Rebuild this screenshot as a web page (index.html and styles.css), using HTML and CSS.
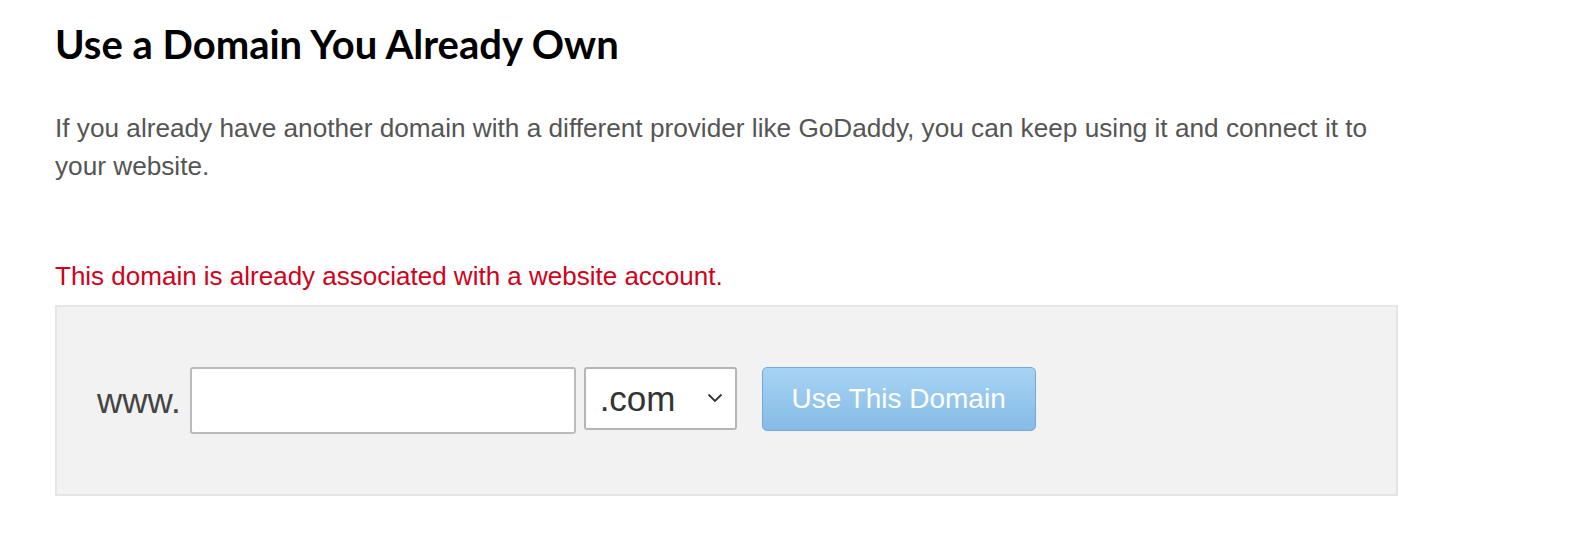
FILE: index.html
```html
<!DOCTYPE html>
<html lang="en">
<head>
<meta charset="UTF-8">
<meta name="viewport" content="width=device-width, initial-scale=1.0">
<title>Use a Domain You Already Own</title>
<link rel="stylesheet" href="styles.css">
</head>
<body>
<div class="page">
    <h2 class="title">Use a Domain You Already Own</h2>
    <p class="intro">If you already have another domain with a different provider like GoDaddy, you can keep using it and connect it to your website.</p>

    <p class="error">This domain is already associated with a website account.</p>

    <form class="domain-box">
        <label for="domain" class="prefix">www.</label>
        <input type="text" id="domain" class="domain-input">
        <div class="tld">
            <select id="tld">
                <option>.com</option>
                <option>.net</option>
                <option>.org</option>
            </select>
            <svg class="chevron" width="16" height="10" viewBox="0 0 16 10"><path d="M1.5 1.5 L8 8 L14.5 1.5" fill="none" stroke="#333" stroke-width="1.8"/></svg>
        </div>
        <button type="button" class="use-btn">Use This Domain</button>
    </form>
</div>
</body>
</html>
```

FILE: styles.css
```css
body {
    margin: 0;
    background: #fff;
    font-family: "Liberation Sans", Arial, sans-serif;
}
.page {
    width: 1343px;
    padding: 0 0 0 55px;
}
.title {
    font-family: Lato, "Open Sans", sans-serif;
    font-weight: 700;
    font-size: 40px;
    line-height: 48px;
    margin: 20px 0 0;
    color: #000;
}
.intro {
    font-size: 26.2px;
    line-height: 38px;
    color: #555;
    margin: 41px 0 0;
}
.error {
    font-size: 26px;
    line-height: 38px;
    color: #d0021b;
    margin: 72px 0 0;
}
.domain-box {
    display: flex;
    align-items: flex-start;
    margin-top: 10px;
    padding: 60px 40px;
    background: #f2f2f2;
    border: 2px solid #e5e5e5;
}
.prefix {
    font-size: 35px;
    color: #444;
    line-height: 67px;
    margin-right: 9px;
    margin-left: 0;
}
.domain-input {
    width: 386px;
    height: 67px;
    box-sizing: border-box;
    border: 2px solid #bbb;
    border-radius: 3px;
    background: #fff;
    margin: 0;
}
.tld {
    position: relative;
    margin-left: 8px;
}
.tld select {
    appearance: none;
    -webkit-appearance: none;
    width: 153px;
    height: 63px;
    box-sizing: border-box;
    border: 2px solid #b5b5b5;
    border-radius: 3px;
    background: #fff;
    font-family: "Liberation Sans", Arial, sans-serif;
    font-size: 35px;
    color: #333;
    padding: 0 0 0 14px;
}
.chevron {
    position: absolute;
    right: 14px;
    top: 26px;
    pointer-events: none;
}
.use-btn {
    margin-left: 25px;
    width: 274px;
    height: 64px;
    border: 1px solid #72a9d9;
    border-radius: 5px;
    background: linear-gradient(#a7d4f4, #85bbe5);
    color: #fff;
    font-family: "Liberation Sans", Arial, sans-serif;
    font-size: 28px;
    cursor: pointer;
}
```
